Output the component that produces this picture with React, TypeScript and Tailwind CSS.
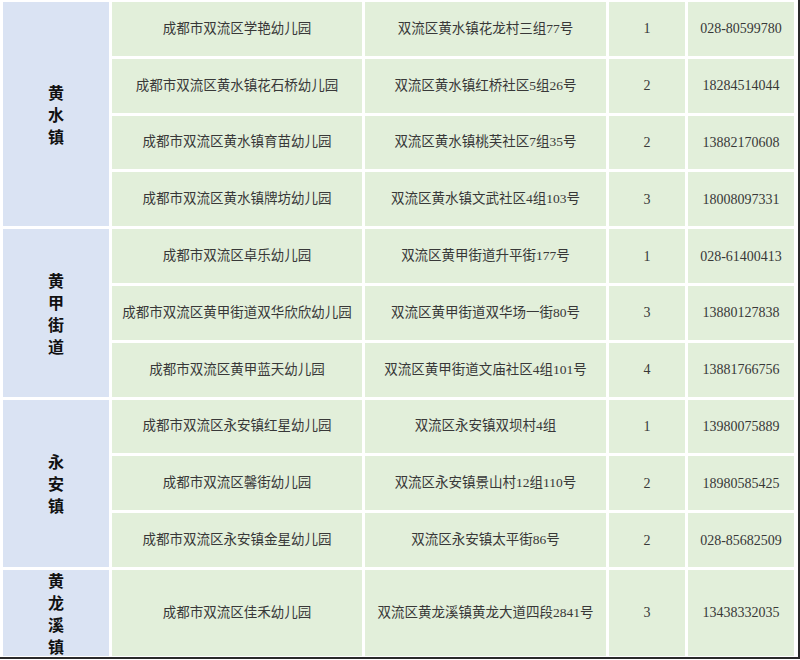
import React from "react";

type Row = { name: string; addr: string; n: string; phone: string };
type Group = { town: string; rows: Row[] };

const groups: Group[] = [
  {
    town: "黄水镇",
    rows: [
      { name: "成都市双流区学艳幼儿园", addr: "双流区黄水镇花龙村三组77号", n: "1", phone: "028-80599780" },
      { name: "成都市双流区黄水镇花石桥幼儿园", addr: "双流区黄水镇红桥社区5组26号", n: "2", phone: "18284514044" },
      { name: "成都市双流区黄水镇育苗幼儿园", addr: "双流区黄水镇桃芙社区7组35号", n: "2", phone: "13882170608" },
      { name: "成都市双流区黄水镇牌坊幼儿园", addr: "双流区黄水镇文武社区4组103号", n: "3", phone: "18008097331" },
    ],
  },
  {
    town: "黄甲街道",
    rows: [
      { name: "成都市双流区卓乐幼儿园", addr: "双流区黄甲街道升平街177号", n: "1", phone: "028-61400413" },
      { name: "成都市双流区黄甲街道双华欣欣幼儿园", addr: "双流区黄甲街道双华场一街80号", n: "3", phone: "13880127838" },
      { name: "成都市双流区黄甲蓝天幼儿园", addr: "双流区黄甲街道文庙社区4组101号", n: "4", phone: "13881766756" },
    ],
  },
  {
    town: "永安镇",
    rows: [
      { name: "成都市双流区永安镇红星幼儿园", addr: "双流区永安镇双坝村4组", n: "1", phone: "13980075889" },
      { name: "成都市双流区馨街幼儿园", addr: "双流区永安镇景山村12组110号", n: "2", phone: "18980585425" },
      { name: "成都市双流区永安镇金星幼儿园", addr: "双流区永安镇太平街86号", n: "2", phone: "028-85682509" },
    ],
  },
  {
    town: "黄龙溪镇",
    rows: [
      { name: "成都市双流区佳禾幼儿园", addr: "双流区黄龙溪镇黄龙大道四段2841号", n: "3", phone: "13438332035" },
    ],
  },
];

const font = { fontFamily: '"Liberation Serif", "Noto Sans CJK SC", sans-serif' };
const boldFont = { fontFamily: '"Noto Sans CJK SC", sans-serif' };

const spans = ["row-span-4", "row-span-3", "row-span-3", "row-span-1"];

export default function App() {
  let rowIndex = 0;
  return (
    <div className="w-[800px] h-[660px] bg-white overflow-hidden">
      <div className="w-[800px] h-[659px] border-r-[2px] border-b-[2px] border-[#2a2a2a] pl-[3px] pt-[2px]">
        <div
          className="grid grid-cols-[106px_250px_241px_76px_106px] grid-rows-[repeat(10,53.8px)_86px] gap-[3px] text-[13.5px] text-[#383838]"
          style={font}
        >
          {groups.map((g, gi) => (
            <React.Fragment key={g.town}>
              {g.rows.map((r, ri) => {
                rowIndex++;
                return (
                  <React.Fragment key={rowIndex}>
                    {ri === 0 && (
                      <div
                        className={`${spans[gi]} bg-[#dae3f3] flex flex-col items-center justify-center text-[16px] font-bold leading-[22px] text-[#111]`}
                        style={boldFont}
                      >
                        {g.town.split("").map((c, ci) => (
                          <span key={ci}>{c}</span>
                        ))}
                      </div>
                    )}
                    <div className="bg-[#e2efda] flex items-center justify-center">{r.name}</div>
                    <div className="bg-[#e2efda] flex items-center justify-center">{r.addr}</div>
                    <div className="bg-[#e2efda] flex items-center justify-center text-[14px]">{r.n}</div>
                    <div className="bg-[#e2efda] flex items-center justify-center text-[14px]">{r.phone}</div>
                  </React.Fragment>
                );
              })}
            </React.Fragment>
          ))}
        </div>
      </div>
    </div>
  );
}
